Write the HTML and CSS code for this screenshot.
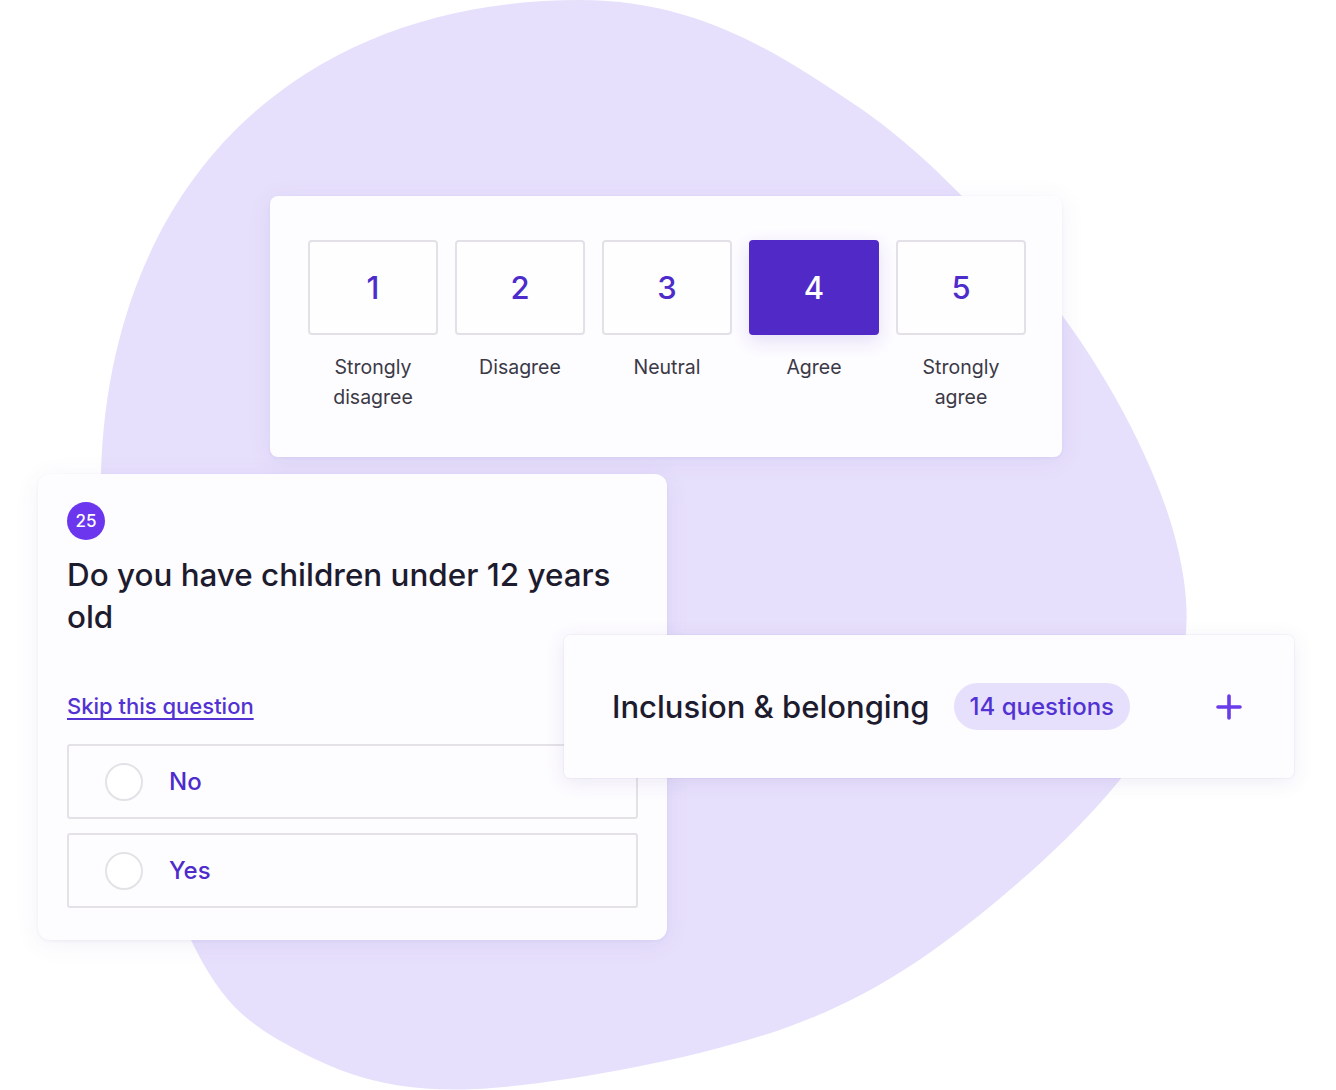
FILE: index.html
```html
<!DOCTYPE html>
<html lang="en">
<head>
<meta charset="utf-8">
<title>Survey preview</title>
<link rel="stylesheet" href="styles.css">
</head>
<body>
<div class="stage">
  <svg class="blob" width="1336" height="1090" viewBox="0 0 1336 1090" aria-hidden="true">
    <path d="M580 0 C700 0 780 55 851 102 C931.3 154.5 1007.7 241.2 1062 315 C1116.3 388.8 1160.7 477.5 1177 545 C1193.3 612.5 1189.8 660.8 1160 720 C1130.2 779.2 1060 848.8 998 900 C936 951.2 875.2 995.5 788 1027 C700.8 1058.5 556.8 1085.2 475 1089 C393.2 1092.8 344.3 1074.8 297 1050 C249.7 1025.2 222.2 1005 191 940 C144 842 96.5 619.5 101 473 C110 180 300 0 580 0 Z" fill="#e7e0fc"/>
  </svg>

  <section class="card scale-card">
    <div class="scale">
      <div class="scale-item">
        <div class="scale-btn">1</div>
        <div class="scale-label">Strongly<br>disagree</div>
      </div>
      <div class="scale-item">
        <div class="scale-btn">2</div>
        <div class="scale-label">Disagree</div>
      </div>
      <div class="scale-item">
        <div class="scale-btn">3</div>
        <div class="scale-label">Neutral</div>
      </div>
      <div class="scale-item">
        <div class="scale-btn selected">4</div>
        <div class="scale-label">Agree</div>
      </div>
      <div class="scale-item">
        <div class="scale-btn">5</div>
        <div class="scale-label">Strongly<br>agree</div>
      </div>
    </div>
  </section>

  <section class="card question-card">
    <div class="q-badge">25</div>
    <h2 class="q-title">Do you have children under 12 years old</h2>
    <a class="q-skip" href="#">Skip this question</a>
    <div class="q-options">
      <div class="q-option"><span class="radio"></span><span class="q-option-text">No</span></div>
      <div class="q-option"><span class="radio"></span><span class="q-option-text">Yes</span></div>
    </div>
  </section>

  <section class="card section-card">
    <span class="section-title">Inclusion &amp; belonging</span>
    <span class="pill">14 questions</span>
    <svg class="plus" width="28" height="28" viewBox="0 0 28 28" aria-hidden="true">
      <path d="M14 3 V25 M3 14 H25" stroke="#6a3be9" stroke-width="3.6" stroke-linecap="round" fill="none"/>
    </svg>
  </section>
</div>
</body>
</html>
```

FILE: styles.css
```css
* { box-sizing: border-box; }

html, body {
  margin: 0;
  padding: 0;
  background: #ffffff;
}

body {
  font-family: "Inter", "Liberation Sans", sans-serif;
  color: #1d1b2e;
}

.stage {
  position: relative;
  width: 1336px;
  height: 1090px;
  overflow: hidden;
  background: #ffffff;
}

.blob {
  position: absolute;
  left: 0;
  top: 0;
}

.card {
  position: absolute;
  background: #fdfcff;
  box-shadow: 0 4px 24px rgba(90, 70, 150, 0.08), 0 1px 3px rgba(90, 70, 150, 0.06);
}

/* Likert scale card */
.scale-card {
  left: 270px;
  top: 196px;
  width: 792px;
  height: 261px;
  border-radius: 8px;
  padding: 44px 37px 0 38px;
}

.scale {
  display: flex;
  gap: 17px;
}

.scale-item {
  width: 130px;
  display: flex;
  flex-direction: column;
  align-items: center;
}

.scale-btn {
  width: 130px;
  height: 95px;
  border: 2px solid #e3e1e7;
  border-radius: 4px;
  background: #fefeff;
  display: flex;
  align-items: center;
  justify-content: center;
  font-size: 31px;
  font-weight: 500;
  color: #4d2ccb;
}

.scale-btn.selected {
  background: #5129c7;
  border-color: #5129c7;
  color: #ffffff;
  box-shadow: 0 6px 18px rgba(81, 41, 199, 0.14);
}

.scale-label {
  margin-top: 17px;
  font-size: 19.5px;
  line-height: 30px;
  color: #3b3946;
  text-align: center;
}

/* Question card */
.question-card {
  left: 38px;
  top: 474px;
  width: 629px;
  height: 466px;
  border-radius: 12px;
  padding: 28px 29px 0 29px;
  display: flex;
  flex-direction: column;
  align-items: flex-start;
}

.q-badge {
  width: 38px;
  height: 38px;
  border-radius: 50%;
  background: #6b36ee;
  color: #ffffff;
  font-size: 17px;
  font-weight: 500;
  display: flex;
  align-items: center;
  justify-content: center;
}

.q-title {
  margin: 14px 0 0 0;
  font-size: 31.4px;
  line-height: 42px;
  font-weight: 500;
  color: #1d1b2e;
  width: 560px;
}

.q-skip {
  margin-top: 53px;
  font-size: 22px;
  line-height: 30px;
  font-weight: 500;
  color: #5232d2;
  text-decoration: underline;
  text-underline-offset: 4px;
  text-decoration-thickness: 1.5px;
}

.q-options {
  margin-top: 23px;
  display: flex;
  flex-direction: column;
  gap: 14px;
  width: 571px;
}

.q-option {
  height: 75px;
  border: 2px solid #e4e2e7;
  border-radius: 3px;
  display: flex;
  align-items: center;
  padding-left: 36px;
  gap: 26px;
}

.radio {
  width: 38px;
  height: 38px;
  border-radius: 50%;
  border: 2px solid #e4e2e7;
  background: #ffffff;
}

.q-option-text {
  font-size: 24px;
  font-weight: 500;
  color: #4d2ccb;
}

/* Section card */
.section-card {
  left: 564px;
  top: 635px;
  width: 730px;
  height: 143px;
  border-radius: 6px;
  padding: 0 51px 0 48px;
  display: flex;
  align-items: center;
  box-shadow: 0 4px 20px rgba(90, 70, 150, 0.10), 0 0 0 1px rgba(120, 100, 180, 0.05);
}

.section-title {
  font-size: 31px;
  font-weight: 500;
  color: #1d1b2e;
}

.pill {
  margin-left: 24px;
  height: 47px;
  padding: 0 16px;
  border-radius: 24px;
  background: #e6e0fc;
  color: #5232d2;
  font-size: 24px;
  font-weight: 500;
  display: flex;
  align-items: center;
}

.plus {
  margin-left: auto;
}
```
